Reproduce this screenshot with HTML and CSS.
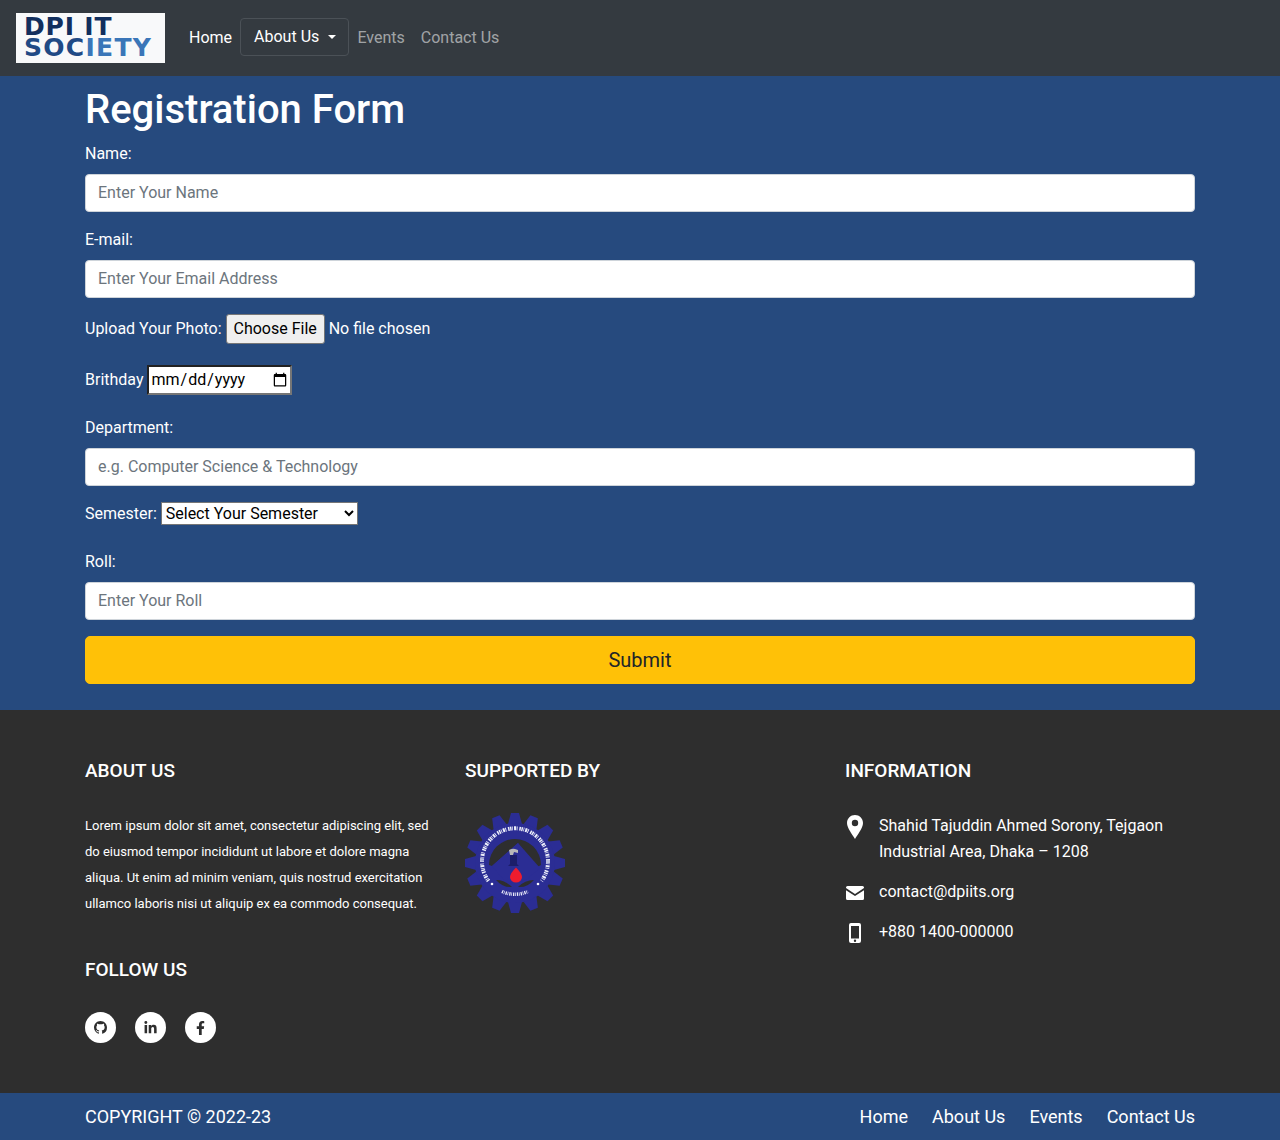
FILE: index.html
```html
<!DOCTYPE html>
<html lang="en">
<head>
<meta charset="utf-8">
<title>Registration Form</title>
<link rel="stylesheet" href="styles.css">
</head>
<body>
<nav class="navbar">
  <a class="brand" href="#"><span class="brand-top">DPI IT</span><span class="brand-bottom">SOC<span class="brand-light">IETY</span></span></a>
  <ul class="nav">
    <li><a class="nav-link active" href="#">Home</a></li>
    <li><button class="nav-drop" type="button">About Us<span class="caret"></span></button></li>
    <li><a class="nav-link" href="#">Events</a></li>
    <li><a class="nav-link" href="#">Contact Us</a></li>
  </ul>
</nav>
<main class="main">
  <div class="container">
    <h1 class="title">Registration Form</h1>
    <form>
      <div class="group"><label class="label">Name:</label><input class="control" type="text" placeholder="Enter Your Name"></div>
      <div class="group"><label class="label">E-mail:</label><input class="control" type="email" placeholder="Enter Your Email Address"></div>
      <div class="group file-row"><label>Upload Your Photo:</label><input class="file" type="file"></div>
      <div class="group date-row"><label>Brithday</label> <input class="date" type="date"></div>
      <div class="group"><label class="label">Department:</label><input class="control" type="text" placeholder="e.g. Computer Science &amp; Technology"></div>
      <div class="group select-row"><label>Semester:</label> <select class="select"><option>Select Your Semester</option></select></div>
      <div class="group"><label class="label">Roll:</label><input class="control" type="text" placeholder="Enter Your Roll"></div>
      <button class="submit" type="button">Submit</button>
    </form>
  </div>
</main>
<footer class="footer">
  <div class="container cols">
    <section class="col">
      <h2 class="foot-title">ABOUT US</h2>
      <p class="about">Lorem ipsum dolor sit amet, consectetur adipiscing elit, sed do eiusmod tempor incididunt ut labore et dolore magna aliqua. Ut enim ad minim veniam, quis nostrud exercitation ullamco laboris nisi ut aliquip ex ea commodo consequat.</p>
      <h2 class="foot-title follow">FOLLOW US</h2>
      <div class="socials">
        <a class="social" href="#" aria-label="GitHub"><svg viewBox="0 0 16 16" width="13" height="13"><path fill="#2e2e2e" d="M8 0C3.58 0 0 3.58 0 8c0 3.54 2.29 6.53 5.47 7.59.4.07.55-.17.55-.38 0-.19-.01-.82-.01-1.49-2.01.37-2.53-.49-2.69-.94-.09-.23-.48-.94-.82-1.13-.28-.15-.68-.52-.01-.53.63-.01 1.08.58 1.23.82.72 1.21 1.87.87 2.33.66.07-.52.28-.87.51-1.07-1.78-.2-3.64-.89-3.64-3.95 0-.87.31-1.59.82-2.15-.08-.2-.36-1.02.08-2.12 0 0 .67-.21 2.2.82.64-.18 1.32-.27 2-.27.68 0 1.36.09 2 .27 1.53-1.04 2.2-.82 2.2-.82.44 1.1.16 1.92.08 2.12.51.56.82 1.27.82 2.15 0 3.07-1.87 3.75-3.65 3.95.29.25.54.73.54 1.48 0 1.07-.01 1.93-.01 2.2 0 .21.15.46.55.38A8.013 8.013 0 0016 8c0-4.42-3.58-8-8-8z"/></svg></a>
        <a class="social" href="#" aria-label="LinkedIn"><svg viewBox="0 0 448 512" width="13" height="14"><path fill="#2e2e2e" d="M100.28 448H7.4V148.9h92.88zM53.79 108.1C24.09 108.1 0 83.5 0 53.8a53.79 53.79 0 0 1 107.58 0c0 29.7-24.1 54.3-53.79 54.3zM447.9 448h-92.68V302.4c0-34.7-.7-79.2-48.29-79.2-48.29 0-55.69 37.7-55.69 76.7V448h-92.78V148.9h89.08v40.8h1.3c12.4-23.5 42.69-48.3 87.88-48.3 94 0 111.28 61.9 111.28 142.3V448z"/></svg></a>
        <a class="social" href="#" aria-label="Facebook"><svg viewBox="0 0 320 512" width="9" height="14"><path fill="#2e2e2e" d="M279.14 288l14.22-92.66h-88.91v-60.13c0-25.35 12.42-50.06 52.24-50.06h40.42V6.26S260.43 0 225.36 0c-73.22 0-121.08 44.38-121.08 124.72v70.62H22.89V288h81.39v224h100.17V288z"/></svg></a>
      </div>
    </section>
    <section class="col">
      <h2 class="foot-title">SUPPORTED BY</h2>
      <svg class="emblem" viewBox="0 0 100 100" width="100" height="100" role="img" aria-label="Institute emblem">
        <defs><polygon id="tooth" points="46,0 54,0 57,11 43,11" fill="#2b2d94"/></defs>
        <use href="#tooth"/>
        <use href="#tooth" transform="rotate(22.5 50 50)"/>
        <use href="#tooth" transform="rotate(45 50 50)"/>
        <use href="#tooth" transform="rotate(67.5 50 50)"/>
        <use href="#tooth" transform="rotate(90 50 50)"/>
        <use href="#tooth" transform="rotate(112.5 50 50)"/>
        <use href="#tooth" transform="rotate(135 50 50)"/>
        <use href="#tooth" transform="rotate(157.5 50 50)"/>
        <use href="#tooth" transform="rotate(180 50 50)"/>
        <use href="#tooth" transform="rotate(202.5 50 50)"/>
        <use href="#tooth" transform="rotate(225 50 50)"/>
        <use href="#tooth" transform="rotate(247.5 50 50)"/>
        <use href="#tooth" transform="rotate(270 50 50)"/>
        <use href="#tooth" transform="rotate(292.5 50 50)"/>
        <use href="#tooth" transform="rotate(315 50 50)"/>
        <use href="#tooth" transform="rotate(337.5 50 50)"/>
        <circle cx="50" cy="50" r="40" fill="#2b2d94"/>
        <path d="M23.500 68 A33 33 0 1 1 76.500 68" fill="none" stroke="#eceefa" stroke-width="4" stroke-dasharray="1.400 .7 .7 1.100 2 .6 .9 1.800 1.500 .6"/>
        <path d="M37 78.500 A32 32 0 0 0 63 78.500" fill="none" stroke="#eceefa" stroke-width="3.500" stroke-dasharray="1.300 .8 .7 1"/>
        <circle cx="27" cy="71" r="1.300" fill="#fff"/>
        <circle cx="73" cy="71" r="1.300" fill="#fff"/>
        <path d="M24 52 A26 26 0 0 1 76 52 L70 55 L53 30 L27 53 Z" fill="#2e2e2e"/>
        <path d="M53 30 L75 55 L62 66 L50 71 L38 66 L27 53 Z" fill="#2b2d94"/>
        <path d="M31 67 Q40 67 47 74 Q38 75 31 67 Z M69 67 Q60 67 53 74 Q62 75 69 67 Z" fill="#2e2e2e"/>
        <path d="M45 42 h7 v9 l2 2 h-11 l2 -2 z" fill="#1c1e6a"/>
        <path d="M44 37 q4 -2 6 -1 l3 1 v3 l-4 -1 -1 3 h-3 z" fill="#b8b8b8"/>
        <path d="M51 54.500 Q57 60.500 57 64 A6 5.500 0 0 1 45 64 Q45 60.500 51 54.500 Z" fill="#ee1c2e"/>
      </svg>
    </section>
    <section class="col">
      <h2 class="foot-title">INFORMATION</h2>
      <ul class="info">
        <li class="info-item"><span class="info-icon icon-pin"><svg viewBox="0 0 16 24" width="16" height="24"><path fill="#fff" fill-rule="evenodd" d="M8 0C3.600 0 0 3.500 0 7.900c0 5.200 5.600 11.600 8 16 2.400-4.400 8-10.800 8-16C16 3.500 12.400 0 8 0zm0 4.800a3.200 3.200 0 1 1 0 6.400 3.200 3.200 0 0 1 0-6.400z"/></svg></span><span>Shahid Tajuddin Ahmed Sorony, Tejgaon Industrial Area, Dhaka – 1208</span></li>
        <li class="info-item"><span class="info-icon icon-mail"><svg viewBox="0 0 18 14" width="18" height="14"><path fill="#fff" d="M1.500 0h15A1.500 1.500 0 0 1 18 1.500v.6l-9 5.800-9-5.800v-.6A1.500 1.500 0 0 1 1.500 0zM0 4.200l9 5.800 9-5.800v8.300a1.500 1.500 0 0 1-1.500 1.500h-15A1.500 1.500 0 0 1 0 12.500z"/></svg></span><span>contact@dpiits.org</span></li>
        <li class="info-item"><span class="info-icon icon-phone"><svg viewBox="0 0 12 20" width="12" height="20"><path fill="#fff" fill-rule="evenodd" d="M2 0h8a2 2 0 0 1 2 2v16a2 2 0 0 1-2 2H2a2 2 0 0 1-2-2V2a2 2 0 0 1 2-2zm0 3v12.500h8V3zm4 13.500a1.200 1.200 0 1 0 0 2.400 1.200 1.200 0 0 0 0-2.400z"/></svg></span><span>+880 1400-000000</span></li>
      </ul>
    </section>
  </div>
</footer>
<div class="copybar">
  <div class="container copy-inner">
    <span>COPYRIGHT © 2022-23</span>
    <div class="copy-links"><a href="#">Home</a><a href="#">About Us</a><a href="#">Events</a><a href="#">Contact Us</a></div>
  </div>
</div>
</body>
</html>
```
FILE: styles.css
```css
* { box-sizing: border-box; }
html, body { margin: 0; padding: 0; }
body { font-family: Roboto, "Liberation Sans", sans-serif; font-size: 16px; line-height: 1.5; color: #fff; background: #264a7e; }
a { text-decoration: none; color: inherit; }
ul { list-style: none; margin: 0; padding: 0; }
input, select, button { font-family: inherit; font-size: inherit; line-height: inherit; margin: 0; }

.navbar { display: flex; align-items: center; height: 76px; padding: 0 16px; background: #343a40; }
.brand { display: flex; flex-direction: column; width: 149px; height: 50px; margin-right: 16px; padding: 4px 0 0 8px; background: #f8f9fa; font-family: "DejaVu Sans", "Liberation Sans", sans-serif; font-weight: 700; font-size: 25px; line-height: 20.5px; }
.brand-top { letter-spacing: .8px; color: #122f5e; }
.brand-bottom { letter-spacing: 1.3px; color: #1f4a85; }
.brand-light { color: #3a76b8; }
.nav { display: flex; align-items: center; }
.nav-link { display: block; padding: 8px; color: rgba(255,255,255,.55); }
.nav-link.active { color: #fff; }
.nav-drop { display: flex; align-items: center; height: 38px; margin-bottom: 2px; padding: 0 12px 0 13px; color: #fff; background: #343a40; border: 1px solid #4b5157; border-radius: 4px; }
.caret { width: 0; height: 0; margin-left: 9.160px; border-top: 4.800px solid #fff; border-left: 4.800px solid transparent; border-right: 4.800px solid transparent; }

.main { padding: 10px 0 26px; }
.container { width: 1110px; margin: 0 auto; }
.title { margin: 0 0 8px; font-size: 40px; font-weight: 500; line-height: 48px; }
.group { margin-bottom: 16px; }
.label { display: block; margin-bottom: 8px; }
.control { display: block; width: 100%; height: 38px; padding: 5px 12px 7px; color: #212529; background: #fff; border: 1px solid #ced4da; border-radius: 4px; }
.control::placeholder { color: #6c757d; }
.file-row { display: flex; align-items: center; height: 30px; margin-bottom: 21px; }
.file { height: 30px; margin-left: 4px; color: #fff; }
.file::file-selector-button { width: 99px; height: 30px; margin-right: 4px; padding: 0; font: inherit; color: #000; background: #efefef; border: 1px solid #767676; border-radius: 3px; }
.date-row { height: 30px; margin-bottom: 21px; }
.date { color: #000; background: #fff; border: 2px inset #767676; }
.select-row { height: 24px; margin-bottom: 24px; }
.select { width: 197px; color: #000; background: #fff; border: 1px solid #767676; }
.submit { display: block; width: 100%; height: 48px; font-size: 20px; color: #212529; background: #ffc107; border: 1px solid #ffc107; border-radius: 5px; }

.footer { padding: 50px 0; background: #2e2e2e; }
.cols { display: grid; grid-template-columns: repeat(3, 350px); column-gap: 30px; }
.col { min-width: 0; }
.foot-title { margin: 0 0 31px; font-size: 19px; font-weight: 500; line-height: 22px; }
.follow { margin-top: 42px; margin-bottom: 31px; }
.about { margin: 0; font-size: 13px; line-height: 26px; }
.socials { display: flex; gap: 19px; }
.social { display: flex; align-items: center; justify-content: center; width: 31px; height: 31px; border-radius: 50%; background: #fff; }
.emblem { display: block; }
.info-item { display: flex; gap: 14px; line-height: 26px; margin-bottom: 14px; }
.info-icon { display: flex; justify-content: center; align-items: flex-start; flex: 0 0 20px; }
.icon-pin { padding-top: 2px; }
.icon-mail { padding-top: 7px; }
.icon-phone { padding-top: 4px; }
.copybar { height: 47px; padding-top: 10px; background: #264a7e; font-size: 18px; line-height: 27px; }
.copy-inner { display: flex; justify-content: space-between; }
.copy-links { display: flex; gap: 24px; }
```
